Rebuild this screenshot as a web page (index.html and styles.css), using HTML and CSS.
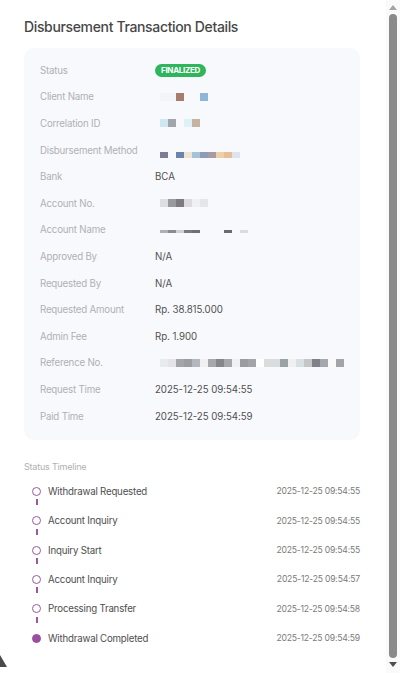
FILE: index.html
```html
<!DOCTYPE html>
<html lang="en">
<head>
<meta charset="utf-8">
<title>Disbursement Transaction Details</title>
<link rel="stylesheet" href="styles.css">
</head>
<body>
<div class="modal">
  <main class="content">
    <h1 class="title">Disbursement Transaction Details</h1>
    <section class="card">
      <div class="row"><span class="label">Status</span><span class="value"><span class="badge">FINALIZED</span></span></div>
      <div class="row"><span class="label">Client Name</span><span class="value"><span class="redact r-client"></span></span></div>
      <div class="row"><span class="label">Correlation ID</span><span class="value"><span class="redact r-corr"></span></span></div>
      <div class="row"><span class="label">Disbursement Method</span><span class="value"><span class="redact r-method"></span></span></div>
      <div class="row"><span class="label">Bank</span><span class="value">BCA</span></div>
      <div class="row"><span class="label">Account No.</span><span class="value"><span class="redact r-accno"></span></span></div>
      <div class="row"><span class="label">Account Name</span><span class="value"><span class="redact r-accname"></span></span></div>
      <div class="row"><span class="label">Approved By</span><span class="value">N/A</span></div>
      <div class="row"><span class="label">Requested By</span><span class="value">N/A</span></div>
      <div class="row"><span class="label">Requested Amount</span><span class="value">Rp. 38.815.000</span></div>
      <div class="row"><span class="label">Admin Fee</span><span class="value">Rp. 1.900</span></div>
      <div class="row"><span class="label">Reference No.</span><span class="value"><span class="redact r-ref"></span></span></div>
      <div class="row"><span class="label">Request Time</span><span class="value">2025-12-25 09:54:55</span></div>
      <div class="row"><span class="label">Paid Time</span><span class="value">2025-12-25 09:54:59</span></div>
    </section>
    <h2 class="section-title">Status Timeline</h2>
    <ol class="timeline">
      <li class="tl-item"><span class="dot"></span><span class="tl-label">Withdrawal Requested</span><span class="tl-time">2025-12-25 09:54:55</span></li>
      <li class="tl-item"><span class="dot"></span><span class="tl-label">Account Inquiry</span><span class="tl-time">2025-12-25 09:54:55</span></li>
      <li class="tl-item"><span class="dot"></span><span class="tl-label">Inquiry Start</span><span class="tl-time">2025-12-25 09:54:55</span></li>
      <li class="tl-item"><span class="dot"></span><span class="tl-label">Account Inquiry</span><span class="tl-time">2025-12-25 09:54:57</span></li>
      <li class="tl-item"><span class="dot"></span><span class="tl-label">Processing Transfer</span><span class="tl-time">2025-12-25 09:54:58</span></li>
      <li class="tl-item last"><span class="dot filled"></span><span class="tl-label">Withdrawal Completed</span><span class="tl-time">2025-12-25 09:54:59</span></li>
    </ol>
  </main>
  <div class="scrollbar" aria-hidden="true">
    <span class="arrow up"></span>
    <span class="thumb"></span>
    <span class="arrow down"></span>
  </div>
  <span class="corner" aria-hidden="true"></span>
</div>
</body>
</html>
```

FILE: styles.css
```css
* { box-sizing: border-box; }
html, body { margin: 0; padding: 0; }
body {
  background: #ffffff;
  font-family: Inter, "Noto Sans", sans-serif;
  color: #4a4a4a;
}
.modal {
  width: 400px;
  height: 673px;
  display: flex;
  background: #ffffff;
  overflow: hidden;
  position: relative;
}
.content {
  flex: 1;
  padding: 17px 26px 0 24px;
}
.title {
  margin: 0;
  font-size: 14px;
  font-weight: 500;
  color: #474747;
  line-height: 20px;
  letter-spacing: -0.35px;
}
.card {
  margin-top: 11px;
  background: #f8f9fd;
  border-radius: 10px;
  padding: 9px 16px 11px 16px;
}
.row {
  display: grid;
  grid-template-columns: 115px 1fr;
  align-items: center;
  height: 26.6px;
}
.label {
  font-size: 9.7px;
  color: #b0b0b4;
  letter-spacing: -0.2px;
}
.value {
  font-size: 9.7px;
  color: #505050;
  display: flex;
  align-items: center;
  letter-spacing: -0.05px;
}
.badge {
  display: inline-block;
  background: #2fb55c;
  color: #fff;
  font-size: 8px;
  font-weight: 700;
  line-height: 13px;
  height: 13px;
  padding: 0 6px;
  border-radius: 7px;
  letter-spacing: -0.3px;
}
.redact { display: block; margin-left: 5px; height: 8px; }
.r-client {
  width: 48px;
  margin-top: 1px;
  background: linear-gradient(90deg, #f2f4f8 0 16px, #a67c6c 16px 24px, transparent 24px 40px, #8fb6da 40px 48px);
}
.r-corr {
  width: 40px;
  background: linear-gradient(90deg, #cfe6f5 0 8px, #a2a5ab 8px 16px, transparent 16px 24px, #dcf2f6 24px 32px, #c6b3a0 32px 40px);
}
.r-method {
  width: 80px;
  height: 6px;
  margin-top: 10px;
  background: linear-gradient(90deg, #7d7d95 0 8px, transparent 8px 16px, #6a84aa 16px 24px, #ede4d2 24px 32px, #a5c3d8 32px 40px, #8f9ab8 40px 48px, #a59aa5 48px 56px, #ecd0a8 56px 64px, #e6bf97 64px 72px, #dfe3ee 72px 80px);
}
.r-accno {
  width: 48px;
  background: linear-gradient(90deg, #dcdee4 0 8px, #9a9a9e 8px 16px, #7c7c80 16px 24px, #dcdae0 24px 32px, #f0f0f4 32px 40px, #e4e6ec 40px 48px);
}
.r-accname {
  width: 88px;
  height: 3px;
  margin-top: 4px;
  background: linear-gradient(90deg, #b0b0b4 0 8px, #8a8a90 8px 16px, #d0d0d4 16px 24px, #7a7a7e 24px 32px, #707074 32px 40px, transparent 40px 64px, #6a6a70 64px 72px, transparent 72px 80px, #dcdce0 80px 88px);
}
.r-ref {
  width: 184px;
  margin-top: 1px;
  background: linear-gradient(90deg, #e8ebee 0 8px, #e4e4e6 8px 16px, #a4a4aa 16px 24px, #9c9ca2 24px 32px, #b4b8be 32px 40px, #f0f0f2 40px 48px, #a8a8ac 48px 56px, #86868c 56px 64px, #a6a8aa 64px 72px, #eef2f4 72px 80px, #9a9ca0 80px 88px, #a4a4a8 88px 96px, #ffffff 96px 104px, #dcdcdc 104px 112px, #d8dcde 112px 120px, #9aa2a2 120px 128px, #f0f0f0 128px 136px, #d8e0e2 136px 144px, #c4c6c8 144px 152px, #808088 152px 160px, #a4a8ac 160px 168px, #fafafa 168px 176px, #a4a4a8 176px 184px);
}
.section-title {
  margin: 21px 0 0 0;
  font-size: 9px;
  font-weight: 400;
  color: #b0b0b4;
  line-height: 12px;
  letter-spacing: -0.2px;
}
.timeline {
  list-style: none;
  margin: 10px 0 0 0;
  padding: 0 0 0 8px;
}
.tl-item {
  display: grid;
  grid-template-columns: 16px 1fr auto;
  align-items: center;
  height: 16px;
  margin-bottom: 13.4px;
  position: relative;
}
.tl-item::after {
  content: "";
  position: absolute;
  left: 3.5px;
  top: 16px;
  width: 2px;
  height: 6px;
  background: #9a5a9e;
}
.tl-item.last::after { display: none; }
.dot {
  width: 9px;
  height: 9px;
  border-radius: 50%;
  border: 1.3px solid #9a5a9e;
}
.dot.filled { background: #9a4f9c; border-color: #9a4f9c; }
.tl-label {
  font-size: 9.7px;
  color: #4e4e4e;
  letter-spacing: -0.2px;
}
.tl-time {
  font-size: 8.6px;
  color: #7a7a7a;
  letter-spacing: -0.2px;
}
.scrollbar {
  width: 14px;
  display: flex;
  flex-direction: column;
  align-items: center;
  padding: 5px 0 6px 0;
  background: #fafafa;
}
.thumb {
  flex: 1;
  width: 8px;
  margin: 4px 0;
  background: #8a8a8a;
  border-radius: 4px;
}
.arrow {
  width: 0;
  height: 0;
  border-left: 4.5px solid transparent;
  border-right: 4.5px solid transparent;
}
.arrow.up { border-bottom: 5px solid #a3a3a3; }
.arrow.down { border-top: 5px solid #505050; }
.corner {
  position: absolute;
  left: 0;
  bottom: 6px;
  width: 0;
  height: 0;
  border-bottom: 12px solid #4a4a4a;
  border-right: 7px solid transparent;
}
```
